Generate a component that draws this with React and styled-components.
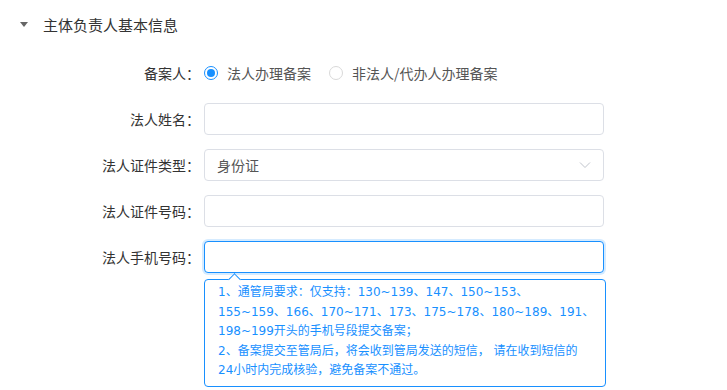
import React from "react";
import styled, { createGlobalStyle } from "styled-components";

const GlobalStyle = createGlobalStyle`
  body {
    margin: 0;
    background: #fff;
    font-family: "Noto Sans CJK SC", "Noto Sans", sans-serif;
    color: #333;
  }
`;

const Page = styled.div`
  width: 727px;
  height: 390px;
  overflow: hidden;
`;

const Section = styled.div`
  display: flex;
  align-items: center;
  height: 48px;
  padding-left: 20px;
  font-size: 15px;
  color: #333;
  .caret {
    width: 0;
    height: 0;
    border-left: 4px solid transparent;
    border-right: 4px solid transparent;
    border-top: 5px solid #666;
    margin-right: 15px;
  }
`;

const Form = styled.div`
  display: flex;
  flex-direction: column;
  gap: 14px;
  padding-top: 9px;
`;

const Row = styled.div`
  display: flex;
  align-items: center;
  height: 32px;
`;

const Label = styled.div`
  width: 200px;
  text-align: right;
  font-size: 14px;
  color: #333;
  margin-right: 4px;
  flex-shrink: 0;
`;

const Radios = styled.div`
  display: flex;
  align-items: center;
  gap: 18px;
`;

const RadioItem = styled.label`
  display: flex;
  align-items: center;
  gap: 9px;
  font-size: 14px;
  color: #555;
`;

const RadioDot = styled.span`
  width: 14px;
  height: 14px;
  box-sizing: border-box;
  border-radius: 50%;
  border: 1px solid ${(p) => (p.checked ? "#1890ff" : "#d9d9d9")};
  display: flex;
  align-items: center;
  justify-content: center;
  &::after {
    content: "";
    width: 8px;
    height: 8px;
    border-radius: 50%;
    background: ${(p) => (p.checked ? "#1890ff" : "transparent")};
  }
`;

const Field = styled.div`
  position: relative;
  width: 400px;
  height: 32px;
`;

const Input = styled.div`
  box-sizing: border-box;
  width: 100%;
  height: 100%;
  border: 1px solid ${(p) => (p.focused ? "#1890ff" : "#dcdfe6")};
  border-radius: 4px;
  box-shadow: ${(p) => (p.focused ? "0 0 0 2px rgba(24,144,255,0.18)" : "none")};
  display: flex;
  align-items: center;
  justify-content: space-between;
  padding: 0 12px;
  font-size: 14px;
  color: #555;
  background: #fff;
`;

const Popover = styled.div`
  position: absolute;
  left: 0;
  top: 38px;
  width: 402px;
  box-sizing: border-box;
  border: 1px solid #1890ff;
  border-radius: 4px;
  background: #fff;
  padding: 3px 10px 5px 13px;
  font-family: "DejaVu Sans", "Noto Sans CJK SC", sans-serif;
  font-size: 12px;
  line-height: 19.5px;
  color: #1890ff;
  &::before {
    content: "";
    position: absolute;
    left: 25px;
    top: -5px;
    width: 8px;
    height: 8px;
    background: #fff;
    border-left: 1px solid #1890ff;
    border-top: 1px solid #1890ff;
    transform: rotate(45deg);
  }
`;

const Chevron = () => (
  <svg width="12" height="8" viewBox="0 0 12 8" fill="none">
    <path d="M1 1.5L6 6.5L11 1.5" stroke="#c0c4cc" strokeWidth="1" />
  </svg>
);

const App = () => {
  return (
    <Page>
      <GlobalStyle />
      <Section>
        <span className="caret" />
        主体负责人基本信息
      </Section>
      <Form>
        <Row>
          <Label>备案人：</Label>
          <Radios>
            <RadioItem>
              <RadioDot checked />
              法人办理备案
            </RadioItem>
            <RadioItem>
              <RadioDot />
              非法人/代办人办理备案
            </RadioItem>
          </Radios>
        </Row>
        <Row>
          <Label>法人姓名：</Label>
          <Field>
            <Input />
          </Field>
        </Row>
        <Row>
          <Label>法人证件类型：</Label>
          <Field>
            <Input>
              身份证
              <Chevron />
            </Input>
          </Field>
        </Row>
        <Row>
          <Label>法人证件号码：</Label>
          <Field>
            <Input />
          </Field>
        </Row>
        <Row>
          <Label>法人手机号码：</Label>
          <Field>
            <Input focused />
            <Popover>
              1、通管局要求：仅支持：130~139、147、150~153、
              <br />
              155~159、166、170~171、173、175~178、180~189、191、
              <br />
              198~199开头的手机号段提交备案；
              <br />
              2、备案提交至管局后，将会收到管局发送的短信， 请在收到短信的
              <br />
              24小时内完成核验，避免备案不通过。
            </Popover>
          </Field>
        </Row>
      </Form>
    </Page>
  );
};

export default App;
